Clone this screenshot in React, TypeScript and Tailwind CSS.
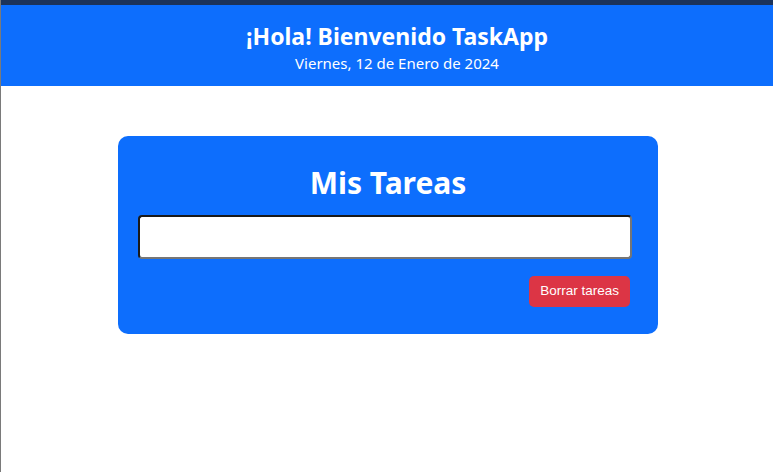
export default function App() {
  return (
    <div
      className="min-h-[472px] bg-white border-l border-[#7a7a7a]"
      style={{ fontFamily: '"Noto Sans", "Open Sans", sans-serif' }}
    >
      <div className="h-[5px] bg-[#1c3359]" />
      <header className="bg-[#0d6efd] text-white text-center h-[81px] pt-[16px] pl-[20px]">
        <h1 className="text-[23px] font-bold leading-[30px]">¡Hola! Bienvenido TaskApp</h1>
        <p className="text-[15px] leading-[20px] mt-[2px]">Viernes, 12 de Enero de 2024</p>
      </header>

      <main className="flex justify-center pt-[50px]">
        <div className="w-[540px] h-[198px] ml-[2px] bg-[#0d6efd] rounded-[10px] px-[20px] pt-[26px]">
          <h2 className="text-white text-[30px] font-bold text-center leading-[42px]">Mis Tareas</h2>
          <input
            type="text"
            className="mt-[11px] block w-[494px] h-[44px] bg-white rounded-[4px] border-2 border-t-[#1a1a1a] border-l-[#1a1a1a] border-b-[#767676] border-r-[#767676] outline-none"
          />
          <div className="flex justify-end mt-[17px] pr-[8px]">
            <button
              className="bg-[#dc3545] text-white text-[13.5px] h-[31px] px-[11px] rounded-[5px]"
              style={{ fontFamily: '"Liberation Sans", Arial, sans-serif' }}
            >
              Borrar tareas
            </button>
          </div>
        </div>
      </main>
    </div>
  );
}
